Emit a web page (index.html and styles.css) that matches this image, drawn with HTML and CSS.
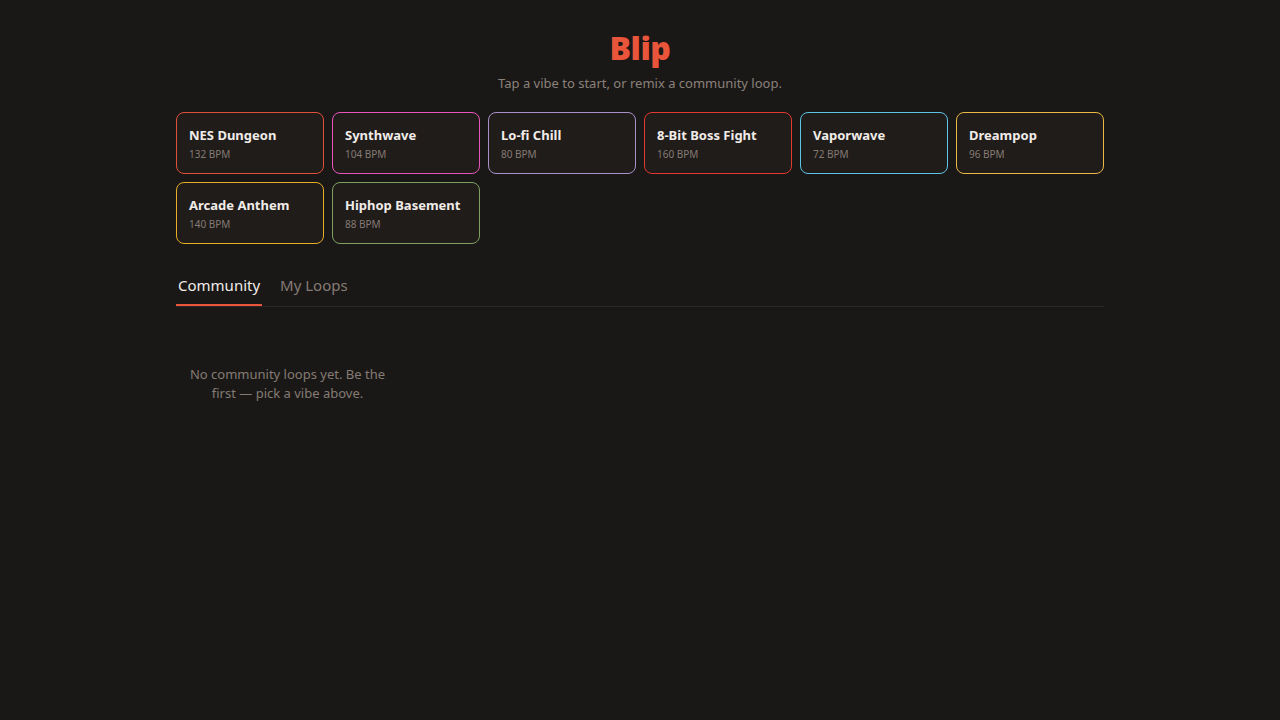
FILE: index.html
```html
<!DOCTYPE html>
<html lang="en">
<head>
    <meta charset="UTF-8">
    <meta name="viewport" content="width=device-width, initial-scale=1.0">
    <title>Blip</title>
    <link rel="stylesheet" href="styles.css">
</head>
<body>
    <main class="app">
        <header class="masthead">
            <h1 class="logo">Blip</h1>
            <p class="tagline">Tap a vibe to start, or remix a community loop.</p>
        </header>

        <section class="vibes">
            <button class="vibe vibe-nes"><span class="vibe-name">NES Dungeon</span><span class="vibe-bpm">132 BPM</span></button>
            <button class="vibe vibe-synth"><span class="vibe-name">Synthwave</span><span class="vibe-bpm">104 BPM</span></button>
            <button class="vibe vibe-lofi"><span class="vibe-name">Lo-fi Chill</span><span class="vibe-bpm">80 BPM</span></button>
            <button class="vibe vibe-boss"><span class="vibe-name">8-Bit Boss Fight</span><span class="vibe-bpm">160 BPM</span></button>
            <button class="vibe vibe-vapor"><span class="vibe-name">Vaporwave</span><span class="vibe-bpm">72 BPM</span></button>
            <button class="vibe vibe-dream"><span class="vibe-name">Dreampop</span><span class="vibe-bpm">96 BPM</span></button>
            <button class="vibe vibe-arcade"><span class="vibe-name">Arcade Anthem</span><span class="vibe-bpm">140 BPM</span></button>
            <button class="vibe vibe-hiphop"><span class="vibe-name">Hiphop Basement</span><span class="vibe-bpm">88 BPM</span></button>
        </section>

        <nav class="tabs">
            <button class="tab active">Community</button>
            <button class="tab">My Loops</button>
        </nav>

        <section class="loops">
            <p class="empty">No community loops yet. Be the first — pick a vibe above.</p>
        </section>
    </main>
</body>
</html>
```

FILE: styles.css
```css
body {
    margin: 0;
    background-color: #1a1817;
    color: #ece6e1;
    font-family: "Noto Sans", "Open Sans", sans-serif;
}

.app {
    max-width: 928px;
    margin: 0 auto;
    padding-top: 26px;
}

.masthead {
    text-align: center;
    margin-bottom: 20px;
}

.logo {
    margin: 0;
    font-size: 32px;
    line-height: 44px;
    font-weight: 900;
    color: #e8553a;
    letter-spacing: -0.5px;
}

.tagline {
    margin: 4px 0 0;
    font-size: 13px;
    color: #8a817a;
}

.vibes {
    display: grid;
    grid-template-columns: repeat(6, 1fr);
    gap: 8px;
}

.vibe {
    display: flex;
    flex-direction: column;
    align-items: flex-start;
    gap: 3px;
    height: 62px;
    padding: 13px 12px;
    background-color: #201c1a;
    border: 1px solid #e8553a;
    border-radius: 8px;
    font-family: inherit;
    cursor: pointer;
}

.vibe-name {
    font-size: 13px;
    font-weight: 700;
    color: #f1ece8;
}

.vibe-bpm {
    font-size: 10px;
    color: #857b74;
}

.vibe-nes { border-color: #e05038; }
.vibe-synth { border-color: #e855b8; }
.vibe-lofi { border-color: #a792c9; }
.vibe-boss { border-color: #e0392f; }
.vibe-vapor { border-color: #5cc4e6; }
.vibe-dream { border-color: #eab844; }
.vibe-arcade { border-color: #e6ad25; }
.vibe-hiphop { border-color: #7ea061; }

.tabs {
    display: flex;
    gap: 2px;
    margin-top: 26px;
    border-bottom: 1px solid #2a2725;
}

.tab {
    padding: 5px 2px 9px;
    margin-right: 14px;
    background: none;
    border: none;
    border-bottom: 2px solid transparent;
    font-family: inherit;
    font-size: 15px;
    color: #857b74;
    cursor: pointer;
}

.tab.active {
    color: #f1ece8;
    border-bottom-color: #e8553a;
}

/* loop cards go in here; the empty note takes one column */
.loops {
    display: grid;
    grid-template-columns: repeat(auto-fill, minmax(200px, 1fr));
    gap: 12px;
    padding-top: 50px;
}

.empty {
    margin: 0;
    padding: 8px 12px;
    text-align: center;
    font-size: 13px;
    line-height: 19px;
    color: #857b74;
}
```
